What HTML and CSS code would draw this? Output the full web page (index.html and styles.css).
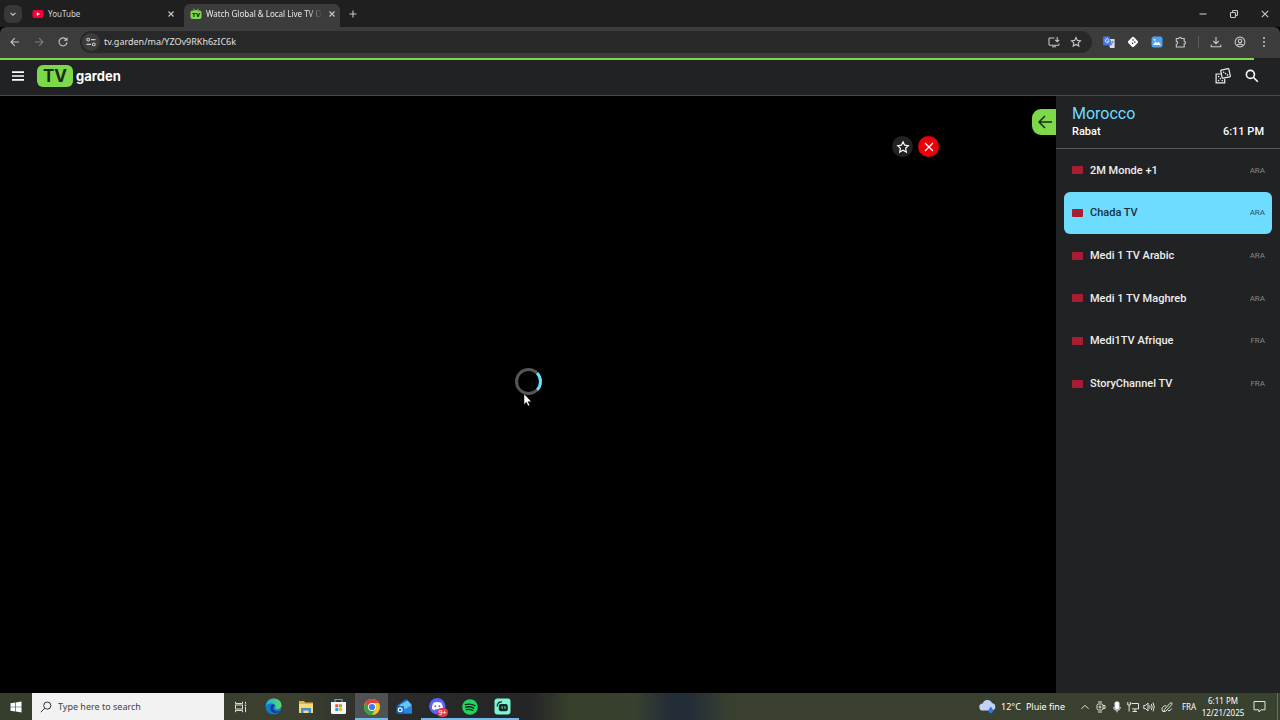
FILE: index.html
```html
<!DOCTYPE html>
<html lang="en">
<head>
    <meta charset="UTF-8">
    <meta name="viewport" content="width=device-width, initial-scale=1.0">
    <title>Watch Global &amp; Local Live TV</title>
    <link rel="stylesheet" href="styles.css">
</head>
<body>
    <!-- Browser tabs -->
    <div class="tab-strip">
        <button class="tab-search" aria-label="Search tabs">
            <svg width="8" height="8" viewBox="0 0 8 8" class="line"><path d="M1.5 2.8 4 5.2l2.5-2.4"/></svg>
        </button>
        <div class="tab">
            <svg width="12" height="12" viewBox="0 0 12 12"><rect x="0.5" y="2" width="11" height="8" rx="2" fill="#f5003d"/><path d="M4.8 4.2v3.6L8 6z" fill="#fff"/></svg>
            <span class="tab-title">YouTube</span>
            <button class="tab-close" aria-label="Close YouTube"><svg width="8" height="8" viewBox="0 0 8 8" class="line"><path d="M1.5 1.5l5 5m0-5l-5 5"/></svg></button>
        </div>
        <div class="tab active">
            <svg width="12" height="12" viewBox="0 0 12 12"><path d="M3.5 1 6 3l2.5-2" stroke="#7dd84a" fill="none"/><rect x="0.5" y="2.6" width="11" height="8.4" rx="2" fill="#7dd84a"/><text x="6" y="9.2" text-anchor="middle" class="fav-text">TV</text></svg>
            <span class="tab-title fade">Watch Global &amp; Local Live TV O</span>
            <button class="tab-close" aria-label="Close TV Garden"><svg width="8" height="8" viewBox="0 0 8 8" class="line"><path d="M1.5 1.5l5 5m0-5l-5 5"/></svg></button>
        </div>
        <button class="new-tab" aria-label="New tab"><svg width="10" height="10" viewBox="0 0 10 10" class="line"><path d="M5 1.5v7M1.5 5h7"/></svg></button>
        <div class="window-controls">
            <button aria-label="Minimize"><svg width="10" height="10" viewBox="0 0 10 10" class="line"><path d="M1.5 5h7"/></svg></button>
            <button aria-label="Restore"><svg width="10" height="10" viewBox="0 0 10 10" class="line"><rect x="1.5" y="3.5" width="5" height="5" rx="0.8"/><path d="M3.5 3.3V2.3q0-.8.8-.8h3.4q.8 0 .8.8v3.4q0 .8-.8.8h-1"/></svg></button>
            <button aria-label="Close"><svg width="10" height="10" viewBox="0 0 10 10" class="line"><path d="M1.8 1.8l6.4 6.4m0-6.4L1.8 8.2"/></svg></button>
        </div>
    </div>

    <!-- Browser toolbar -->
    <div class="toolbar">
        <button aria-label="Back"><svg width="12" height="12" viewBox="0 0 12 12" class="line"><path d="M10 6H2.2M5.8 2.2 2 6l3.8 3.8"/></svg></button>
        <button aria-label="Forward" disabled><svg width="12" height="12" viewBox="0 0 12 12" class="line"><path d="M2 6h7.8M6.2 2.2 10 6 6.2 9.8"/></svg></button>
        <button aria-label="Reload"><svg width="12" height="12" viewBox="0 0 12 12" class="line"><path d="M9.3 3.6A4 4 0 1 0 10 6.4M10 1.6v2.6H7.2"/></svg></button>
        <div class="address">
            <button class="site-info" aria-label="Site information"><svg width="12" height="12" viewBox="0 0 12 12" class="line"><circle cx="3.2" cy="3.6" r="1.4"/><path d="M6 3.6h4.5M1.5 8.4H6"/><circle cx="8.8" cy="8.4" r="1.4"/></svg></button>
            <input type="text" aria-label="Address" value="tv.garden/ma/YZOv9RKh6zIC6k">
            <button aria-label="Install app"><svg width="12" height="12" viewBox="0 0 12 12" class="line"><path d="M6.5 2H1.6q-.6 0-.6.6v6q0 .6.6.6h8.8q.6 0 .6-.6V7.5M4 10.8h4M9.2 1v4.6M7.2 3.8l2 2 2-2"/></svg></button>
            <button aria-label="Bookmark"><svg width="12" height="12" viewBox="0 0 12 12" class="line"><path d="M6 1.5l1.4 2.9 3.1.4-2.3 2.1.6 3.2L6 8.5l-2.8 1.6.6-3.2-2.3-2.1 3.1-.4z"/></svg></button>
        </div>
        <div class="extensions">
            <button aria-label="Translate"><svg width="12" height="12" viewBox="0 0 12 12"><path d="M5 3h6q.6 0 .6.6v7.8q0 .6-.6.6H7z" fill="#d8dde6"/><path d="M.8 0.6h5.6L9 9.2H.8q-.6 0-.6-.6V1.2q0-.6.6-.6z" fill="#4b7be5"/><path d="M5.7 3.6A1.8 1.8 0 1 0 6 5H4.4" stroke="#fff" stroke-width=".8" fill="none"/><path d="M8 5.8h3M9.5 5v.8q0 1.8-1.4 3" stroke="#5578b8" stroke-width=".7" fill="none"/></svg></button>
            <button aria-label="Dice extension"><svg width="12" height="12" viewBox="0 0 12 12"><rect x="2" y="2" width="8" height="8" rx="1.4" transform="rotate(45 6 6)" fill="#fff"/><circle cx="6" cy="4" r=".8" fill="#222"/><circle cx="7.8" cy="6" r=".8" fill="#222"/><circle cx="5.6" cy="7.2" r=".8" fill="#222"/></svg></button>
            <button aria-label="Image extension"><svg width="12" height="12" viewBox="0 0 12 12"><rect x=".5" y=".5" width="11" height="11" rx="2.5" fill="#4da3ee"/><path d="M2 9l2.6-3.4L6 7.3l1.4-1.6L10 9z" fill="#fff"/><circle cx="3.6" cy="3.8" r=".9" fill="#fff"/></svg></button>
            <button aria-label="Extensions"><svg width="12" height="12" viewBox="0 0 12 12" class="line"><path d="M1.3 2.5h2.6a1.3 1.3 0 0 1 2.6 0h2.7v2.8a1.3 1.3 0 0 1 0 2.6V11H1.3V8.2a1.4 1.4 0 0 0 0-2.8z"/></svg></button>
            <span class="divider"></span>
            <button aria-label="Downloads"><svg width="12" height="12" viewBox="0 0 12 12" class="line"><path d="M6 1v6.5M3.2 5 6 7.8 8.8 5M1.2 8.5v2.3h9.6V8.5"/></svg></button>
            <button aria-label="Profile"><svg width="12" height="12" viewBox="0 0 12 12" class="line"><circle cx="6" cy="6" r="4.9"/><circle cx="6" cy="4.9" r="1.7"/><path d="M2.8 9.4q3.2-2.6 6.4 0"/></svg></button>
            <button aria-label="Menu"><svg width="12" height="12" viewBox="0 0 12 12" fill="#c7c7c7"><circle cx="6" cy="2" r="1"/><circle cx="6" cy="6" r="1"/><circle cx="6" cy="10" r="1"/></svg></button>
        </div>
    </div>

    <!-- Site -->
    <div class="load-progress"><div class="load-bar" style="width: 98%"></div></div>
    <header class="header">
        <button aria-label="Open menu"><svg width="14" height="14" viewBox="0 0 14 14"><path d="M1 3.2h12M1 7h12M1 10.8h12" stroke="#fff" stroke-width="1.7"/></svg></button>
        <a class="logo" href="#"><span class="logo-badge">TV</span><span class="logo-name">garden</span></a>
        <div class="header-actions">
            <button aria-label="Random channel"><svg width="16" height="16" viewBox="0 0 16 16" fill="none" stroke="#eee" stroke-width="1.2"><path d="M6 6H1.1v8.9h8.6V11"/><rect x="6.4" y="1.3" width="8.3" height="8.3" rx=".8" transform="rotate(-12 10.5 5.5)"/><g fill="#eee" stroke="none"><circle cx="8.6" cy="4.3" r=".8"/><circle cx="10.5" cy="5.6" r=".8"/><circle cx="12.5" cy="6.9" r=".8"/><circle cx="3.6" cy="8.6" r=".8"/><circle cx="5.4" cy="10.6" r=".8"/><circle cx="3.6" cy="12.6" r=".8"/><circle cx="7.3" cy="12.6" r=".8"/></g></svg></button>
            <button aria-label="Search"><svg width="14" height="14" viewBox="0 0 14 14" fill="none" stroke="#fff" stroke-width="1.6"><circle cx="5.4" cy="5.4" r="4"/><path d="M8.3 8.3l4.5 4.5"/></svg></button>
        </div>
    </header>

    <div class="content">
        <main class="stage">
            <button class="collapse" aria-label="Hide channel list"><svg width="16" height="16" viewBox="0 0 16 16" fill="none" stroke="#1c2b16" stroke-width="1.5"><path d="M15 8H2M8 2 2 8l6 6"/></svg></button>
            <div class="player">
                <div class="player-actions">
                    <button aria-label="Add to favorites"><svg width="14" height="14" viewBox="0 0 14 14" fill="none" stroke="#fff" stroke-width="1.2"><path d="M7 1.8l1.6 3.4 3.7.5-2.7 2.6.7 3.7L7 10.2 3.7 12l.7-3.7-2.7-2.6 3.7-.5z"/></svg></button>
                    <button class="stop" aria-label="Close player"><svg width="12" height="12" viewBox="0 0 12 12" fill="none" stroke="#fff" stroke-width="1.2"><path d="M2 2l8 8m0-8l-8 8"/></svg></button>
                </div>
                <div class="spinner"></div>
                <svg class="cursor" width="10" height="14" viewBox="0 0 10 14"><path d="M1 .8v10.7l2.4-2.2 1.7 3.8 1.7-.8-1.7-3.6h3.3z" fill="#fff" stroke="#000" stroke-width=".5"/></svg>
            </div>
        </main>

        <aside class="sidebar">
            <div class="country">
                <h1>Morocco</h1>
                <div class="country-info"><span>Rabat</span><span>6:11 PM</span></div>
            </div>
            <nav class="channels">
                <a class="channel" href="#"><span class="flag"></span><span class="name">2M Monde +1</span><span class="lang">ARA</span></a>
                <a class="channel selected" href="#"><span class="flag"></span><span class="name">Chada TV</span><span class="lang">ARA</span></a>
                <a class="channel" href="#"><span class="flag"></span><span class="name">Medi 1 TV Arabic</span><span class="lang">ARA</span></a>
                <a class="channel" href="#"><span class="flag"></span><span class="name">Medi 1 TV Maghreb</span><span class="lang">ARA</span></a>
                <a class="channel" href="#"><span class="flag"></span><span class="name">Medi1TV Afrique</span><span class="lang">FRA</span></a>
                <a class="channel" href="#"><span class="flag"></span><span class="name">StoryChannel TV</span><span class="lang">FRA</span></a>
            </nav>
        </aside>
    </div>

    <!-- Windows taskbar -->
    <footer class="taskbar">
        <button class="start" aria-label="Start"><svg width="12" height="12" viewBox="0 0 12 12" fill="#fff"><path d="M.5 2.2 5.3 1.5v4.2H.5zM5.9 1.4 11.5.6v5.1H5.9zM.5 6.3h4.8v4.2L.5 9.8zM5.9 6.3h5.6v5.1l-5.6-.8z"/></svg></button>
        <label class="task-search">
            <svg width="12" height="12" viewBox="0 0 12 12" fill="none" stroke="#333"><circle cx="7.3" cy="4.6" r="3.6"/><path d="M4.7 7.3.8 11.2"/></svg>
            <input type="text" placeholder="Type here to search" aria-label="Type here to search">
        </label>
        <button class="task-view" aria-label="Task view"><svg width="12" height="12" viewBox="0 0 12 12" fill="none" stroke="#ddd"><path d="M.5.8v1.7h7V.8M.5 11.2V9.5h7v1.7"/><rect x=".5" y="4" width="7" height="4"/><path d="M10.5.8v2M10.5 5.8v5.4"/><path d="M9.8 4.3h1.4" stroke-width="1.4"/></svg></button>
        <div class="apps">
            <button aria-label="Edge"><svg width="17" height="17" viewBox="0 0 17 17"><defs><linearGradient id="edge" x1="0" x2="1"><stop offset="0" stop-color="#1ba7e8"/><stop offset="1" stop-color="#62db62"/></linearGradient></defs><circle cx="8.5" cy="8.5" r="8" fill="#1379ce"/><path d="M.6 8.3C1.2 3.5 4.4.5 8.5.5c4.8 0 8 3.2 8 6.6 0 2.5-1.8 4.2-4.1 4.2-1.8 0-2.5-.8-2.5-1.3.8-1.2.6-3.6-1.7-4.2C5.3 5 2 6 .6 8.3z" fill="url(#edge)"/><path d="M6.4 7.1c-2.8 3.6.1 8.2 4 8 1.9 0 3.6-1 4.7-2.3-3.7 1.9-7.4-.2-7-3 .1-1.1.8-1.6 1.8-1.8 0-1.3-2.2-2-3.5-.9z" fill="#123f82"/></svg></button>
            <button aria-label="File Explorer"><svg width="16" height="16" viewBox="0 0 16 16"><path d="M1 2h5l1.2 1.6H15V14H1z" fill="#e8b23f"/><path d="M1 5h14v9H1z" fill="#fbd878"/><path d="M3 14V9h10v5h-2.5v-2.5h-5V14z" fill="#3c93d4"/></svg></button>
            <button aria-label="Store"><svg width="17" height="17" viewBox="0 0 17 17"><path d="M5 5V1.5h7V5" fill="none" stroke="#3cb2df" stroke-width="1.2"/><path d="M1 4h15v10.5q0 1.5-1.5 1.5h-12Q1 16 1 14.5z" fill="#f5f5f5"/><path d="M5.3 6.3h3v3h-3z" fill="#ef5030"/><path d="M9 6.3h3v3H9z" fill="#7db928"/><path d="M5.3 10h3v3h-3z" fill="#20a3e8"/><path d="M9 10h3v3H9z" fill="#f9b71c"/></svg></button>
            <button class="current running" aria-label="Chrome"><svg width="16" height="16" viewBox="0 0 16 16"><circle cx="8" cy="8" r="8" fill="#f8c822"/><path d="M1.1 4A8 8 0 0 1 14.9 4H8L4.6 10z" fill="#e34133"/><path d="M1.1 4A8 8 0 0 0 8 16l3.5-6H4.6z" fill="#2da44d"/><circle cx="8" cy="8" r="4" fill="#fff"/><circle cx="8" cy="8" r="3.1" fill="#3b7dea"/></svg></button>
            <button aria-label="Mail"><svg width="17" height="17" viewBox="0 0 17 17"><path d="M1.5 7 10 .8 16 6v9.5H2z" fill="#1a62b8"/><path d="M3.5 7 11.5 2.5 15 6.5V11H4z" fill="#65c6f3"/><path d="M2 7.5 9 11l7-4v8.5H3z" fill="#2787df"/><rect x=".5" y="8" width="7.5" height="7.5" rx="1.3" fill="#1368bd"/><circle cx="4.2" cy="11.8" r="1.9" fill="none" stroke="#fff" stroke-width="1.2"/></svg></button>
            <button class="running" aria-label="Discord, 9+ notifications"><svg width="17" height="17" viewBox="0 0 17 17"><circle cx="8.3" cy="8.3" r="8.2" fill="#5865f2"/><path d="M4.4 4.8q4-1.8 8 0 1.8 3 1.4 6.2-1.4 1.1-2.7 1.3l-.8-1.1H6.5l-.8 1.1Q4.4 12.1 3 11q-.4-3.2 1.4-6.2z" fill="#fff"/><circle cx="6.3" cy="8.2" r="1" fill="#5865f2"/><circle cx="10.4" cy="8.2" r="1" fill="#5865f2"/></svg><span class="badge">9+</span></button>
            <button class="running" aria-label="Spotify"><svg width="16" height="16" viewBox="0 0 16 16"><circle cx="8" cy="8" r="7.8" fill="#1ed760"/><path d="M3.3 5.6q5-1.4 9.6 1M3.8 8.2q4.4-1.1 8 .9M4.3 10.6q3.6-.8 6.6.8" fill="none" stroke="#102616" stroke-width="1.4" stroke-linecap="round"/></svg></button>
            <button class="running" aria-label="Streamlabs"><svg width="17" height="17" viewBox="0 0 17 17"><rect x=".5" y=".5" width="16" height="16" rx="3" fill="#80f5d2"/><path d="M3.2 8.4q0-4.6 4.8-4.6" fill="none" stroke="#142b2a" stroke-width="1.2"/><rect x="4.8" y="6" width="9" height="7.3" rx="2" fill="#142b2a"/><path d="M8.2 8.5v2M11 8.5v2" stroke="#80f5d2" stroke-width="1.1"/></svg></button>
        </div>
        <div class="tray">
            <button class="weather">
                <svg width="17" height="15" viewBox="0 0 17 15"><path d="M4 11.5a3.5 3.5 0 0 1-.3-7A5 5 0 0 1 13 4a3.8 3.8 0 0 1 .2 7.5z" fill="#c3d3f6"/><path d="M11.8 7.5q3 3.6 2.3 5-.7 1.7-2.3 1.7T9.5 12.5q-.7-1.4 2.3-5z" fill="#2e7be3"/></svg>
                <span>12°C</span><span>Pluie fine</span>
            </button>
            <div class="tray-icons">
                <button aria-label="Show hidden icons"><svg width="10" height="10" viewBox="0 0 10 10" class="tray-line"><path d="M1.5 6.8 5 3.3l3.5 3.5"/></svg></button>
                <button aria-label="Camera"><svg width="10" height="12" viewBox="0 0 10 12" class="tray-line"><rect x="1" y="3" width="6" height="6" rx="1.5"/><circle cx="4" cy="6" r="1"/><path d="M7 4.5h2v3H7M2 1h4M2 11h4"/></svg></button>
                <button aria-label="Microphone"><svg width="10" height="12" viewBox="0 0 10 12" class="tray-line"><rect x="3" y="1" width="4" height="7" rx="1" fill="#fff"/><path d="M1.8 6v1.2q0 2 3.2 2t3.2-2V6M5 9v2.3"/></svg></button>
                <button aria-label="Network"><svg width="12" height="12" viewBox="0 0 12 12" class="tray-line"><path d="M4.5 2.5h7v5.4H5M8 8v2.4M5.5 10.5H10M.8 1v3h2.6V1M2.1 4v6.5"/></svg></button>
                <button aria-label="Volume"><svg width="12" height="12" viewBox="0 0 12 12" class="tray-line"><path d="M.8 4.4h1.8L5 2v8L2.6 7.6H.8zM6.6 4.4q1 1.6 0 3.2M8.3 3q1.8 3 0 6M10 1.7q2.6 4.3 0 8.6"/></svg></button>
                <button class="pen" aria-label="Windows Ink"><svg width="12" height="12" viewBox="0 0 12 12" class="tray-line"><path d="M3.5 8.5 9 2.2q1-1 1.8-.2t-.2 1.8L5 10l-2 .5zM5.2 4.6Q1 5 1 8.2q0 3 2.4 2.4M7 9.8q2.5.4 3.8-2.3"/></svg></button>
            </div>
            <button class="language">FRA</button>
            <button class="clock"><span>6:11 PM</span><span>12/21/2025</span></button>
            <button class="notifications" aria-label="Notifications"><svg width="13" height="13" viewBox="0 0 13 13" class="tray-line"><path d="M1 1.5h11v8.3H8L6 12V9.8H1z"/></svg></button>
        </div>
    </footer>
</body>
</html>
```
FILE: styles.css
```css
/* Base Styles */
* {
    box-sizing: border-box;
    margin: 0;
    padding: 0;
}

body {
    display: flex;
    flex-direction: column;
    height: 100vh;
    overflow: hidden;
    background: #000;
    color: #fff;
    font-family: Roboto, sans-serif;
    font-size: 11px;
}

button {
    display: flex;
    align-items: center;
    justify-content: center;
    flex-shrink: 0;
    background: none;
    border: none;
    color: inherit;
    font: inherit;
    cursor: pointer;
}

a {
    color: inherit;
    text-decoration: none;
}

svg {
    display: block;
    flex-shrink: 0;
}

input {
    min-width: 0;
    flex: 1;
    background: none;
    border: none;
    outline: none;
    color: inherit;
    font: inherit;
}

.line {
    fill: none;
    stroke: #c7c7c7;
    stroke-width: 1.1;
}

/* Tab Strip */
.tab-strip {
    display: flex;
    align-items: flex-end;
    height: 27px;
    background: #1f1f1f;
    color: #d6d6d6;
    font-family: "Noto Sans", sans-serif;
    font-size: 8px;
}

.tab-search {
    align-self: center;
    width: 18px;
    height: 18px;
    margin: 0 4px;
    border-radius: 6px;
    background: #383838;
}

.tab {
    display: flex;
    align-items: center;
    gap: 4px;
    width: 157px;
    height: 23px;
    padding: 0 6px 4px;
}

.tab.active {
    width: 156px;
    margin-left: 1px;
    padding-right: 5px;
    border-radius: 6px 6px 0 0;
    background: #3c3c3c;
    color: #e8e8e8;
}

.tab-title {
    flex: 1;
    white-space: nowrap;
}

.tab-title.fade {
    mask-image: linear-gradient(to right, #000 88%, transparent);
}

.tab-close {
    width: 12px;
    height: 12px;
}

.new-tab {
    width: 18px;
    height: 27px;
    margin-left: 4px;
}

.window-controls {
    display: flex;
    margin-left: auto;
}

.window-controls button {
    width: 31px;
    height: 27px;
}

.fav-text {
    font: 900 6px Roboto, sans-serif;
    fill: #14260c;
}

/* Toolbar */
.toolbar {
    display: flex;
    align-items: center;
    height: 31px;
    padding: 0 4px 2px 3px;
    background: #3c3c3c;
    border-radius: 6px 6px 0 0;
}

.toolbar button {
    width: 24px;
    height: 22px;
}

.toolbar button:disabled {
    opacity: 0.45;
}

.address {
    display: flex;
    align-items: center;
    flex: 1;
    height: 22px;
    margin: 0 5px;
    padding: 0 5px 0 2px;
    border-radius: 11px;
    background: #282828;
    color: #e0e0e0;
    font-family: "Noto Sans", sans-serif;
    font-size: 9px;
}

.toolbar .address button {
    width: 22px;
}

.toolbar .address .site-info {
    width: 18px;
    height: 18px;
    margin-right: 4px;
    border-radius: 50%;
    background: #3c3c3c;
}

.extensions {
    display: flex;
    align-items: center;
}

.divider {
    width: 1px;
    height: 12px;
    margin: 0 5px;
    background: #5c5c5c;
}

/* Site Header */
.load-progress {
    height: 2px;
    background: #202124;
}

.load-bar {
    height: 2px;
    background: #7dd84a;
}

.header {
    display: flex;
    align-items: center;
    gap: 12px;
    height: 36px;
    padding: 0 21px 3px 11px;
    border-bottom: 1px solid #4a4a4a;
    background: #202224;
}

.logo {
    display: flex;
    align-items: center;
    gap: 3px;
    font-family: Inter, sans-serif;
    font-weight: 700;
}

.logo-badge {
    padding: 0 6px;
    border-radius: 6px;
    background: #7dd84a;
    color: #1b2a16;
    font-size: 17px;
    line-height: 22px;
}

.logo-name {
    font-size: 13px;
    line-height: 20px;
}

.header-actions {
    display: flex;
    align-items: center;
    gap: 14px;
    margin-left: auto;
}

/* Player */
.content {
    display: flex;
    flex: 1;
    min-height: 0;
}

.stage {
    position: relative;
    display: flex;
    flex: 1;
    padding: 40px 117px 67px;
    background: #000;
}

.collapse {
    position: absolute;
    top: 13px;
    right: 0;
    width: 24px;
    height: 26px;
    padding-left: 2px;
    border-radius: 9px 0 0 9px;
    background: #7dd84a;
}

.player {
    position: relative;
    display: flex;
    align-items: center;
    justify-content: center;
    flex: 1;
}

.player-actions {
    position: absolute;
    top: 0;
    right: 0;
    display: flex;
    gap: 5px;
}

.player-actions button {
    width: 21px;
    height: 21px;
    border-radius: 50%;
    background: #222;
}

.player-actions .stop {
    background: #e8000b;
}

.spinner {
    width: 27px;
    height: 27px;
    border: 3px solid #555;
    border-right-color: #6edcff;
    border-radius: 50%;
}

.cursor {
    position: absolute;
    top: calc(50% + 12px);
    left: calc(50% - 5px);
}

/* Channel List */
.sidebar {
    width: 224px;
    background: #202224;
}

.country {
    padding: 8px 16px;
    border-bottom: 1px solid #5a5a5a;
}

.country h1 {
    color: #6edcff;
    font-size: 16px;
    font-weight: 400;
    line-height: 20px;
}

.country-info {
    display: flex;
    justify-content: space-between;
    font-size: 11px;
    font-weight: 500;
    line-height: 16px;
}

.channels {
    display: grid;
    grid-template-rows: repeat(6, 1fr);
    min-height: 256px;
    padding: 0 8px;
}

.channel {
    display: flex;
    align-items: center;
    gap: 7px;
    padding: 0 7px 0 8px;
    border-radius: 6px;
    color: #eee;
}

.channel.selected {
    background: #6edcff;
    color: #17313c;
}

.flag {
    width: 11px;
    height: 8px;
    border-radius: 1px;
    background: #a91d34;
}

.name {
    flex: 1;
    font-size: 11px;
    font-weight: 500;
}

.lang {
    color: #858585;
    font-size: 8px;
}

.selected .lang {
    color: #2b5565;
}

/* Taskbar */
.taskbar {
    display: flex;
    height: 27px;
    background: linear-gradient(to right, #353d2c 0, #3b402f 300px, #2b2b2b 380px, #242526 530px, #37402b 570px, #38412f 635px, #232d38 670px, #232d38 690px, #3a402f 730px, #39412f 100%);
    font-family: "Noto Sans", sans-serif;
    font-size: 9px;
}

.start {
    width: 32px;
}

.task-search {
    display: flex;
    align-items: center;
    gap: 6px;
    width: 192px;
    padding: 0 8px;
    background: #f2f2f2;
    color: #444;
}

.task-search input::placeholder {
    color: #444;
}

.task-view {
    width: 33px;
}

.apps {
    display: grid;
    grid-template-columns: repeat(8, 1fr);
    width: 262px;
}

.apps button {
    position: relative;
    border-bottom: 2px solid transparent;
    border-top: 2px solid transparent;
}

.apps .running {
    border-bottom-color: #76b9ed;
}

.apps .current {
    background: #505152;
    border-top-color: #505152;
}

.badge {
    position: absolute;
    right: 6px;
    bottom: 1px;
    padding: 0 1px;
    border-radius: 5px;
    background: #e03b4b;
    font-size: 7px;
    line-height: 9px;
}

.tray {
    display: flex;
    align-items: center;
    margin-left: auto;
    padding-right: 4px;
    border-right: 1px solid #697060;
    margin-right: 2px;
}

.tray-line {
    fill: none;
    stroke: #e4e4e4;
    stroke-width: 1;
}

.weather {
    gap: 5px;
    margin-right: 12px;
}

.tray-icons {
    display: flex;
}

.tray-icons button {
    width: 16px;
}

.tray-icons .pen {
    width: 20px;
}

.language {
    width: 24px;
    font-size: 8px;
}

.clock {
    flex-direction: column;
    width: 44px;
    font-size: 8px;
    line-height: 12px;
}

.notifications {
    width: 28px;
}
```
